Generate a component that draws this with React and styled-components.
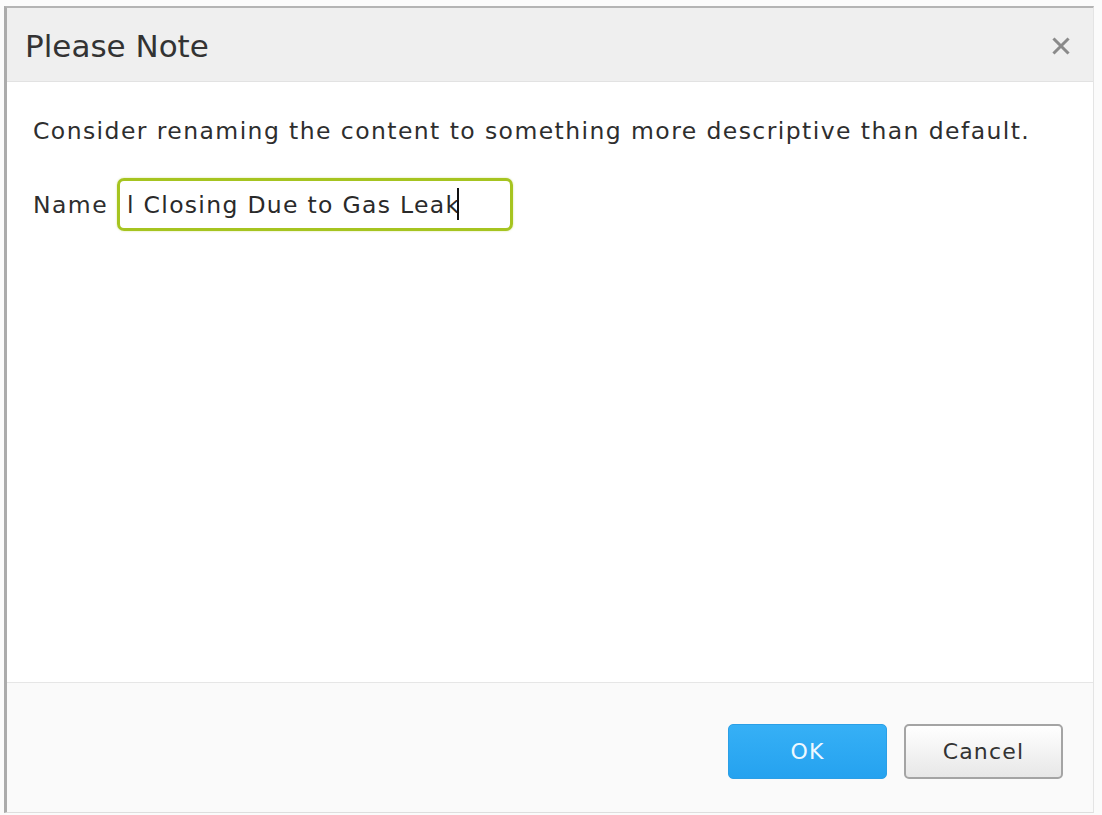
import styled, { createGlobalStyle } from "styled-components";

const GlobalStyle = createGlobalStyle`
  html, body {
    margin: 0;
    padding: 0;
    background: #fbfbfb;
  }
  #root {
    height: 815px;
  }
`;

const Page = styled.div`
  box-sizing: border-box;
  height: 815px;
  padding: 6px 8px 2px 4px;
  font-family: "DejaVu Sans", Verdana, sans-serif;
`;

const Dialog = styled.div`
  box-sizing: border-box;
  height: 100%;
  display: flex;
  flex-direction: column;
  background: #fff;
  border-left: 3px solid #ababab;
  border-top: 2px solid #b4b4b4;
  border-right: 1px solid #e4e4e4;
  border-bottom: 1px solid #dedede;
`;

const Header = styled.div`
  box-sizing: border-box;
  height: 74px;
  display: flex;
  align-items: center;
  justify-content: space-between;
  padding: 3px 18px 0 18px;
  background: #efefef;
  border-bottom: 1px solid #e2e2e2;
`;

const Title = styled.h2`
  margin: 0;
  font-size: 31px;
  font-weight: normal;
  line-height: 36px;
  color: #333;
`;

const Close = styled.button`
  width: 28px;
  height: 28px;
  padding: 0;
  border: none;
  background: transparent;
  display: flex;
  align-items: center;
  justify-content: center;
  cursor: pointer;
`;

const Body = styled.div`
  flex: 1;
  padding: 35px 26px 0;
  display: flex;
  flex-direction: column;
  gap: 32px;
  font-size: 23.5px;
  letter-spacing: 1.42px;
  color: #2e2e2e;
`;

const Message = styled.p`
  margin: 0;
  line-height: 29px;
`;

const Field = styled.label`
  display: flex;
  align-items: center;
  gap: 9px;
`;

const InputBox = styled.div`
  box-sizing: border-box;
  width: 396px;
  height: 53px;
  display: flex;
  align-items: center;
  padding: 0 7px;
  border: 3px solid #a6c420;
  border-radius: 7px;
  box-shadow: 0 0 2px rgba(166, 196, 32, 0.5);
  color: #2a2a2a;
  white-space: nowrap;
  overflow: hidden;
  letter-spacing: 1.3px;
`;

const Caret = styled.span`
  display: inline-block;
  width: 2px;
  height: 32px;
  margin: -2px 0 0 -3px;
  background: #111;
`;

const Footer = styled.div`
  box-sizing: border-box;
  height: 130px;
  display: flex;
  justify-content: flex-end;
  align-items: flex-start;
  gap: 17px;
  padding: 41px 30px 0 0;
  background: #fafafa;
  border-top: 1px solid #e6e6e6;
`;

const Button = styled.button`
  box-sizing: border-box;
  width: 159px;
  height: 55px;
  border-radius: 5px;
  font-family: "DejaVu Sans", Verdana, sans-serif;
  font-size: 22px;
  letter-spacing: 1.2px;
  cursor: pointer;
  border: ${(p) => (p.$primary ? "1px solid #2b9fe6" : "2px solid #a4a4a4")};
  background: ${(p) =>
    p.$primary
      ? "linear-gradient(#36b0f6, #25a2ef)"
      : "linear-gradient(#ffffff, #e7e7e7)"};
  color: ${(p) => (p.$primary ? "#eef8ff" : "#333")};
`;

const CloseIcon = () => (
  <svg width="18" height="18" viewBox="0 0 18 18">
    <path
      d="M2.5 2.5 L15.5 15.5 M15.5 2.5 L2.5 15.5"
      stroke="#8a8a8a"
      strokeWidth="3"
      strokeLinecap="square"
    />
  </svg>
);

const App = () => {
  return (
    <>
      <GlobalStyle />
      <Page>
        <Dialog>
          <Header>
            <Title>Please Note</Title>
            <Close aria-label="Close">
              <CloseIcon />
            </Close>
          </Header>
          <Body>
            <Message>
              Consider renaming the content to something more descriptive than
              default.
            </Message>
            <Field>
              Name
              <InputBox>
                l Closing Due to Gas Leak
                <Caret />
              </InputBox>
            </Field>
          </Body>
          <Footer>
            <Button $primary>OK</Button>
            <Button>Cancel</Button>
          </Footer>
        </Dialog>
      </Page>
    </>
  );
};

export default App;
